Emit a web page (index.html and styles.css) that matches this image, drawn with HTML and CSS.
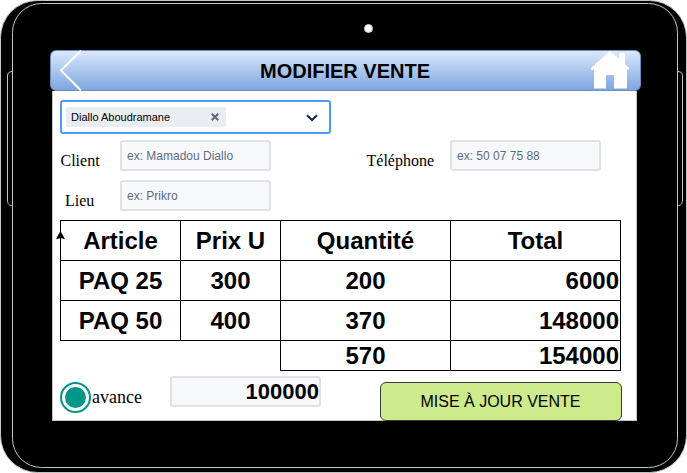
FILE: index.html
```html
<!DOCTYPE html>
<html lang="fr">
<head>
<meta charset="utf-8">
<title>Modifier vente</title>
<link rel="stylesheet" href="styles.css">
</head>
<body>
<div class="tablet">
  <svg class="shell" width="687" height="473" viewBox="0 0 687 473" fill="none" stroke="#c3c7c3">
    <rect x=".5" y=".5" width="686" height="472" rx="37" fill="#000"/>
    <rect x="12.5" y="3.500" width="665" height="464" rx="29"/>
    <path d="M12.500 71.500C9 71.500 7.500 73 7.500 76V200C7.500 204 9 205.500 12.500 205.500M677.500 71.500C681 71.500 682.500 73 682.500 76V200C682.500 204 681 205.500 677.500 205.500"/>
    <circle cx="368.500" cy="28.500" r="4" fill="#fff"/>
  </svg>
  <main class="screen">
    <header class="bar">
      <svg class="back" width="24" height="41" viewBox="0 0 24 41" fill="none" stroke="#fff" stroke-width="2"><path d="M22 .5 2 20.500 22 40.500"/></svg>
      <h1>MODIFIER VENTE</h1>
      <svg class="home" width="40" height="41" viewBox="0 0 40 41" fill="#fff"><path d="M20 .7 29 8.700V3H35V14L39 18V19.700H37V38.600H24V25H16V38.600H4V19.700H1V18Z"/></svg>
    </header>
    <div class="content">
      <div class="select">
        <span class="chip">Diallo Aboudramane
          <svg width="8" height="8" viewBox="0 0 8 8" stroke="#596a83" stroke-width="2"><path d="M.7.7 7.300 7.300M7.300.7.7 7.300"/></svg>
        </span>
        <svg class="chevron" width="12" height="8" viewBox="0 0 12 8" fill="none" stroke="#10254b" stroke-width="2"><path d="M1 1.200 6 6 11 1.200"/></svg>
      </div>
      <div class="row">
        <label>Client</label><div class="field">ex: Mamadou Diallo</div>
        <label class="phone">Téléphone</label><div class="field">ex: 50 07 75 88</div>
      </div>
      <div class="row">
        <label class="place">Lieu</label><div class="field">ex: Prikro</div>
      </div>
      <div class="sales">
        <div>Article</div><div>Prix U</div><div>Quantité</div><div>Total</div>
        <div>PAQ 25</div><div>300</div><div>200</div><div class="num">6000</div>
        <div>PAQ 50</div><div>400</div><div>370</div><div class="num">148000</div>
        <div class="sum">570</div><div class="num">154000</div>
        <svg class="arrow" width="9" height="9" viewBox="0 0 9 9"><path d="M4.500 0 9 8.200 4.500 7 0 8.200Z"/></svg>
      </div>
      <div class="footer">
        <span class="radio"></span>
        <label class="advance">avance</label>
        <div class="field amount">100000</div>
        <button class="update">MISE À JOUR VENTE</button>
      </div>
    </div>
  </main>
</div>
</body>
</html>
```

FILE: styles.css
```css
* { box-sizing: border-box; }
body { margin: 0; background: #fff; overflow: hidden; font-family: "Liberation Sans", Arial, sans-serif; color: #000; }
svg { display: block; flex: none; }
.tablet { position: relative; width: 687px; height: 473px; padding: 50px 0 0 52px; }
.shell { position: absolute; inset: 0; }
.screen { position: relative; width: 585px; height: 371px; }
.bar { display: flex; align-items: center; justify-content: space-between; width: 591px; height: 41px; margin-left: -2px; border: 1px solid #6c8ebf; border-radius: 6px; background: linear-gradient(#dae8fc, #7ea6e0); padding: 0 9.5px 0 7.5px; }
.bar h1 { margin: 0; font-size: 20px; line-height: 24px; padding-left: 17px; }
.content { height: 330px; padding: 9px 0 0 7px; background: #fff; border: solid #c3c7c3; border-width: 0 1px 1px; }
.select { display: flex; align-items: center; justify-content: space-between; width: 271px; height: 34px; border: 2px solid #4c9aff; border-radius: 3px; padding: 0 11.5px 0 4px; }
.chevron { margin-top: 1px; }
.chip { display: flex; align-items: center; justify-content: space-between; width: 160px; height: 20px; padding: 0 7px 0 5px; border-radius: 2px; background: #ebecf0; font-size: 11px; }
.row { display: flex; height: 31px; margin-top: 6px; }
.row + .row { margin-top: 9px; }
.row label { width: 60px; padding: 12px 0 0 .5px; font: 16px/18px "Liberation Serif", serif; }
.row .phone { width: 84px; margin-left: 95px; }
.row .place { padding-left: 5px; }
.field { width: 151px; height: 31px; padding-left: 5px; border: 2px solid #dfe1e6; border-radius: 3px; background: #f7f8f9; color: #5e6c84; font-size: 12px; line-height: 29px; white-space: nowrap; }
.sales { position: relative; display: grid; grid-template-columns: 120px 100px 170px 170px; grid-template-rows: 40px 40px 40px 30px; width: 560px; margin-top: 9px; font-size: 24px; font-weight: 700; text-align: center; line-height: 40px; }
.sales div { margin: 0 -1px -1px 0; border: 1px solid #000; }
.sales .num { text-align: right; padding-right: 1px; }
.sales .sum { grid-column: 3; }
.sales .sum, .sales .sum + .num { line-height: 29px; }
.arrow { position: absolute; left: -4px; top: 11px; }
.footer { display: flex; margin-top: 6px; }
.radio { width: 31px; height: 31px; margin-top: 6px; border: 2px solid #009688; border-radius: 50%; background: #009688; background-clip: content-box; padding: 3px; }
.advance { width: 79px; padding: 11px 0 0 1px; font: 18px/21px "Liberation Serif", serif; }
.amount { padding: 0; text-align: right; color: #000; font-size: 22px; font-weight: 700; line-height: 27px; }
.update { width: 242px; height: 39px; margin: 6px 0 0 59px; padding: 0 1px 0 0; border: 1px solid #36393d; border-radius: 6px; background: #cdeb8b; color: #000; font: 16px "Liberation Sans", Arial, sans-serif; }
```
